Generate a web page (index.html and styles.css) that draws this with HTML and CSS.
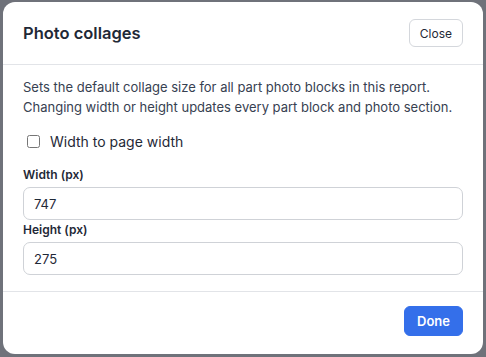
FILE: index.html
```html
<!DOCTYPE html>
<html lang="en">
<head>
    <meta charset="UTF-8">
    <title>Photo collages</title>
    <link rel="stylesheet" href="styles.css">
</head>
<body>
    <div class="dialog">
        <div class="dialog-header">
            <h2>Photo collages</h2>
            <button class="btn">Close</button>
        </div>
        <div class="dialog-body">
            <p class="hint">Sets the default collage size for all part photo blocks in this report. Changing width or height updates every part block and photo section.</p>
            <label class="check">
                <input type="checkbox">
                <span>Width to page width</span>
            </label>
            <div class="field">
                <label for="w">Width (px)</label>
                <input id="w" type="text" value="747">
            </div>
            <div class="field">
                <label for="h">Height (px)</label>
                <input id="h" type="text" value="275">
            </div>
        </div>
        <div class="dialog-footer">
            <button class="btn btn-primary">Done</button>
        </div>
    </div>
</body>
</html>
```

FILE: styles.css
```css
body {
    margin: 0;
    padding: 2px 3px;
    background: #6f727a;
    font-family: Inter, "Noto Sans", sans-serif;
    color: #1f2937;
}
.dialog {
    width: 480px;
    height: 352px;
    background: #fff;
    border-radius: 12px;
    display: flex;
    flex-direction: column;
}
.dialog-header {
    height: 62px;
    padding: 0 20px;
    display: flex;
    align-items: center;
    justify-content: space-between;
    border-bottom: 1px solid #e2e4e8;
}
.dialog-header h2 {
    margin: 0;
    font-size: 16.5px;
    font-weight: 600;
    color: #1f2937;
}
.btn {
    font-family: inherit;
    font-size: 12px;
    color: #1f2937;
    background: #fff;
    border: 1px solid #d4d7dc;
    border-radius: 6px;
    height: 28px;
    padding: 0 10px;
}
.dialog-body {
    flex: 1;
    padding: 12px 20px 0;
    border-bottom: 1px solid #e2e4e8;
}
.hint {
    margin: 0;
    font-size: 13px;
    line-height: 20px;
    color: #374151;
}
.check {
    display: flex;
    align-items: center;
    gap: 10px;
    margin: 16px 0 0 4px;
    font-size: 14px;
    color: #1f2937;
}
.check input {
    width: 13px;
    height: 13px;
    margin: 0;
}
.field {
    display: flex;
    flex-direction: column;
}
.field label {
    font-size: 12px;
    font-weight: 600;
    line-height: 16px;
    margin: 17px 0 4px;
    color: #1f2937;
}
.field + .field label {
    margin-top: 2px;
}
.field input {
    height: 33px;
    box-sizing: border-box;
    border: 1px solid #cfd2d7;
    border-radius: 7px;
    padding: 0 10px;
    font-family: inherit;
    font-size: 13px;
    color: #1f2937;
}
.dialog-footer {
    flex: none;
    padding: 14px 20px 0;
    height: 48px;
    display: flex;
    align-items: flex-start;
    justify-content: flex-end;
}
.btn-primary {
    background: #346fea;
    border-color: #346fea;
    color: #fff;
    font-weight: 600;
    font-size: 13px;
    height: 30px;
    padding: 0 12px;
}
```
